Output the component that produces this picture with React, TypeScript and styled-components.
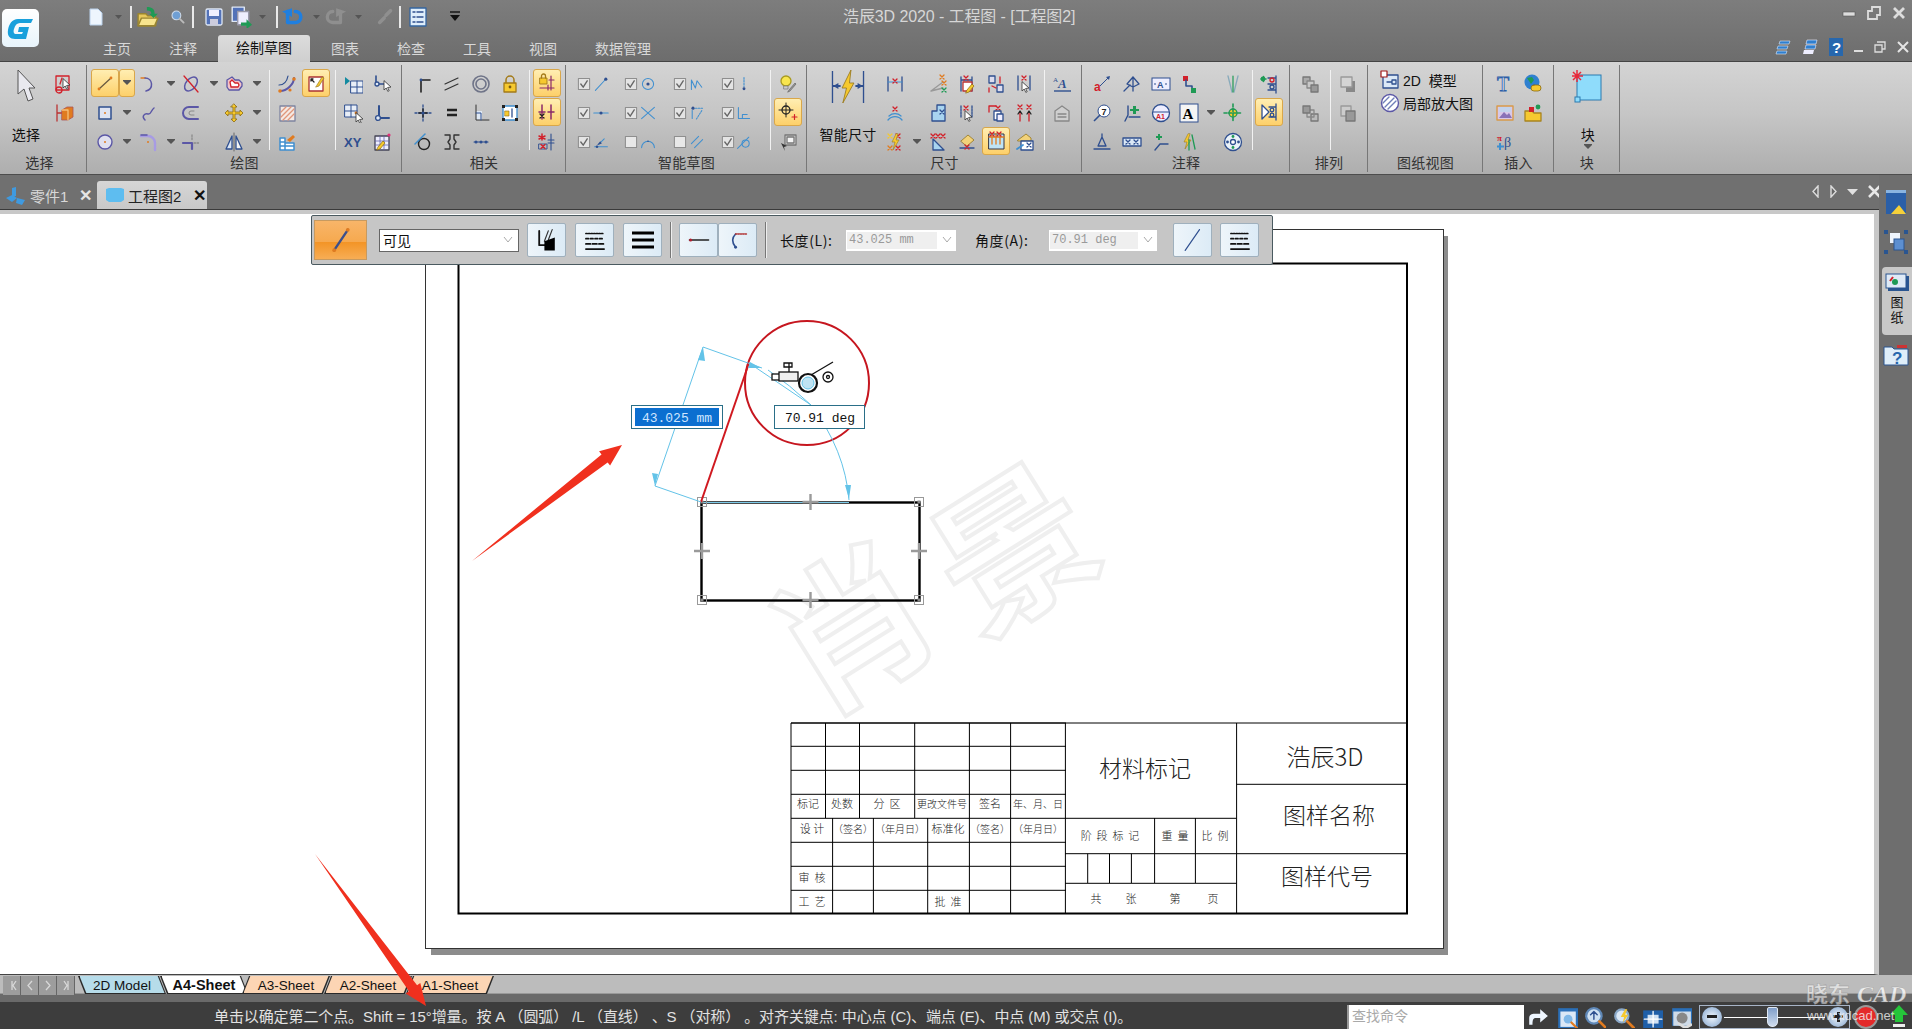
import React from "react";
import styled, { createGlobalStyle } from "styled-components";

const N = "#2f4f8f", P = "#5b57a6", R = "#d2202a", G = "#1f9a55", Y = "#f6c92f", O = "#e07b20", K = "#222", B = "#3f8fd0", A = "#8a8a8a";

const Global = createGlobalStyle`
  html, body { margin: 0; padding: 0; width: 100%; height: 100%; overflow: hidden; background: #707070; }
  body { font-family: "Liberation Sans", "Noto Sans CJK SC", sans-serif; }
  * { box-sizing: border-box; }
  svg { flex: none; }
`;

const Page = styled.div`
  position: relative; width: 1912px; height: 1029px; display: flex; flex-direction: column; overflow: hidden;
`;
const Top = styled.header`
  height: 62px; flex: none; background: linear-gradient(#7d7d7d, #6d6d6d); display: flex; flex-direction: column; position: relative;
  border-bottom: 1px solid #444;
`;
const TitleRow = styled.div`
  height: 35px; flex: none; display: flex; align-items: center; position: relative;
`;
const LogoBox = styled.div`
  width: 37px; height: 38px; margin: 9px 0 0 2px; flex: none; border-radius: 5px; background: linear-gradient(#ffffff, #e8f4fb); display: flex; align-items: center; justify-content: center; align-self: flex-start;
`;
const Qat = styled.div`
  position: absolute; left: 84px; top: 6px; height: 22px; display: flex; align-items: center;
`;
const QatSlot = styled.div<{ $w: number }>`
  width: ${(p) => p.$w}px; flex: none; display: flex; align-items: center; justify-content: center;
`;
const QatSep = styled.div`
  width: 2px; height: 22px; background: #e9e9e9; flex: none;
`;
const AppTitle = styled.div`
  position: absolute; left: 843px; top: 7px; font-size: 16px; line-height: 20px; color: #d6d6d6; white-space: nowrap; letter-spacing: -0.1px;
`;
const WinBtns = styled.div`
  position: absolute; right: 6px; top: 6px; display: flex; gap: 11px; align-items: center;
`;
const TabRow = styled.nav`
  height: 27px; flex: none; margin-left: 84px; display: flex; align-items: flex-end; position: relative;
`;
const Tab = styled.div<{ $on?: boolean }>`
  height: ${(p) => (p.$on ? 27 : 26)}px; padding: 0 ${(p) => (p.$on ? 18 : 19)}px; margin: 0 ${(p) => (p.$on ? 2 : 0)}px; font-size: 14px; line-height: 26px; white-space: nowrap;
  color: ${(p) => (p.$on ? "#111" : "#d8d8d8")};
  background: ${(p) => (p.$on ? "linear-gradient(#dcdcdc,#cfcfcf)" : "transparent")};
  border-radius: 3px 3px 0 0; position: relative; z-index: 1;
`;
const TabTools = styled.div`
  position: absolute; right: 3px; top: 3px; display: flex; gap: 11px; align-items: center;
`;
const Ribbon = styled.section`
  height: 113px; flex: none; display: flex; background: linear-gradient(#d4d4d4 0%, #c6c6c6 45%, #aeaeae 100%); border-bottom: 1px solid #4d4d4d;
`;
const GroupBox = styled.div<{ $w: number }>`
  width: ${(p) => p.$w}px; flex: none; display: flex; flex-direction: column; position: relative;
  &::after { content: ""; position: absolute; right: 0; top: 3px; bottom: 2px; width: 1px; background: #777; }
`;
const GroupBody = styled.div`
  height: 93px; padding-top: 7px; display: flex; flex: none;
`;
const GroupLabel = styled.div<{ $pr?: number }>`
  height: 18px; line-height: 16px; font-size: 14px; text-align: center; color: #333; letter-spacing: 0.3px; padding-right: ${(p) => p.$pr ?? 0}px;
`;
const Col = styled.div<{ $w: number; $ml: number }>`
  width: ${(p) => p.$w}px; margin-left: ${(p) => p.$ml}px; flex: none; display: flex; flex-direction: column;
`;
const Cell = styled.div<{ $active?: boolean; $tall?: boolean }>`
  height: ${(p) => (p.$tall ? 58 : 29)}px; flex: none; display: flex; align-items: ${(p) => (p.$tall ? "flex-start" : "center")}; justify-content: center;
  ${(p) => p.$active && `height: 28px; margin-bottom: 1px; background: linear-gradient(#ffeeb2, #fdd06a); border: 1px solid #d9a74a; border-radius: 3px;`}
`;
const BigText = styled.div`
  font-size: 14px; line-height: 17px; color: #111; white-space: nowrap; letter-spacing: 0.3px; height: 29px; display: flex; flex-direction: column; align-items: center;
`;
const VSep = styled.div`
  width: 1px; height: 80px; background: #f2f2f2; margin-top: 1px;
`;
const PaperStack = styled.div`
  display: flex; flex-direction: column; gap: 3px; padding: 1px 0 0 12px;
`;
const PaperRow = styled.div`
  display: flex; align-items: center; gap: 3px; height: 20px; font-size: 14px; color: #111; white-space: nowrap;
`;
const DocBar = styled.div`
  height: 35px; flex: none; background: #707070; display: flex; align-items: flex-end; position: relative; border-bottom: 1px solid #3a3a3a;
`;
const DocTab = styled.div<{ $on?: boolean }>`
  height: ${(p) => (p.$on ? 28 : 27)}px; width: ${(p) => (p.$on ? 110 : 92)}px; margin-left: ${(p) => (p.$on ? 0 : 5)}px; flex: none; display: flex; align-items: center; gap: 3px;
  padding-left: ${(p) => (p.$on ? 8 : 0)}px; font-size: 15px; white-space: nowrap;
  color: ${(p) => (p.$on ? "#222" : "#d8d8d8")};
  background: ${(p) => (p.$on ? "linear-gradient(#d6d6d6,#c8c8c8)" : "transparent")};
  border-radius: 3px 3px 0 0;
`;
const DocX = styled.span<{ $on?: boolean }>`
  font-size: 16px; font-weight: 700; color: ${(p) => (p.$on ? "#111" : "#e5e5e5")}; margin-left: ${(p) => (p.$on ? 9 : 8)}px;
`;
const DocNav = styled.div`
  position: absolute; left: 1811px; top: 9px; display: flex; align-items: center; gap: 9px;
`;
const Main = styled.main`
  height: 765px; flex: none; display: flex;
`;
const Workspace = styled.div`
  width: 1879px; flex: none; position: relative; background: #fff; border-top: 4px solid #c8c8c8; border-right: 5px solid #c8c8c8; border-bottom: 1px solid #444; box-shadow: 1px 0 0 #333;
`;
const Sheet = styled.svg`
  position: absolute; left: 0; top: 0; display: block;
`;
const Strip = styled.aside`
  flex: 1; background: #6e6e6e; display: flex; flex-direction: column; align-items: center; margin-top: -35px; position: relative; z-index: 2; padding-top: 13px;
`;
const StripIcon = styled.div<{ $mt: number }>`
  margin-top: ${(p) => p.$mt}px; display: flex;
`;
const StripPanel = styled.div`
  width: 30px; margin: 12px 0 0 3px; height: 68px; border-radius: 4px 0 0 4px; background: #c8c8c8; display: flex; flex-direction: column; align-items: center; padding-top: 6px; color: #111;
`;
const StripText = styled.div`
  margin-top: 4px; width: 14px; text-align: center; font-size: 13px; line-height: 15px; word-break: break-all;
`;
const FloatBar = styled.div`
  position: absolute; left: 311px; top: 1px; width: 962px; height: 50px; background: #c6c6c6; border: 1px solid #4a5a60; border-radius: 2px; display: flex; align-items: center; padding-left: 2px; z-index: 3;
`;
const BigOrange = styled.div`
  width: 53px; height: 40px; flex: none; border: 1px solid #c79a60; background: linear-gradient(#f8b569 0%, #f6a94f 55%, #f39426 56%, #f7ad55 100%); display: flex; align-items: center; justify-content: center;
`;
const SelectBox = styled.div`
  width: 140px; height: 23px; margin: 0 8px 0 12px; flex: none; background: #fff; border: 1px solid #666; display: flex; align-items: center; justify-content: space-between; padding: 0 5px 0 3px; font-size: 14px; color: #111;
`;
const PaleBtn = styled.div<{ $ml?: number }>`
  width: 39px; height: 34px; flex: none; margin-left: ${(p) => p.$ml ?? 0}px; border: 1px solid #9fb0bd; border-radius: 2px; background: linear-gradient(90deg, #eef5fa, #dcebf6); display: flex; align-items: center; justify-content: center;
`;
const BarSep = styled.div<{ $ml: number }>`
  width: 1px; height: 36px; flex: none; margin-left: ${(p) => p.$ml}px; background: #777; box-shadow: 1px 0 0 #eee;
`;
const FieldLabel = styled.div<{ $ml: number }>`
  width: 62px; flex: none; margin-left: ${(p) => p.$ml}px; font-size: 14px; letter-spacing: 0.6px; color: #111; white-space: nowrap; font-family: "Noto Sans CJK SC", sans-serif;
`;
const Field = styled.div<{ $w: number; $ml: number }>`
  width: ${(p) => p.$w}px; height: 21px; flex: none; margin-left: ${(p) => p.$ml}px; background: #fff; display: flex; align-items: center; justify-content: space-between; padding: 2px 4px 2px 1px; font-family: "Liberation Mono", monospace; font-size: 12px; color: #9a9a9a;
`;
const FieldVal = styled.span`
  background: #efefef; flex: 1; height: 100%; line-height: 17px; padding-left: 2px; margin-right: 5px; white-space: nowrap;
`;
const SheetBar = styled.div`
  height: 27px; flex: none; background: #bcbcbc; display: flex; padding: 1px 0 0 3px; border-bottom: 8px solid #6a6a6a; box-shadow: inset 0 -1px 0 #999;
  position: relative;
`;
const SheetNav = styled.div`
  width: 18px; height: 19px; flex: none; display: flex; align-items: center; justify-content: center; background: #9d9d9d; border-right: 1px solid #666;
`;
const SheetNavGap = styled.div`
  width: 3px; flex: none;
`;
const SheetTab = styled.div<{ $bg: string; $lean: "l" | "r"; $bold?: boolean }>`
  width: 88px; height: 18px; margin-right: -6px; flex: none; position: relative; display: flex; align-items: center; justify-content: center;
  font-size: ${(p) => (p.$bold ? 14.5 : 13.5)}px; color: #111; font-weight: ${(p) => (p.$bold ? 700 : 400)}; white-space: nowrap;
  clip-path: ${(p) => (p.$lean === "l" ? "polygon(0 0, 92% 0, 100% 100%, 8% 100%)" : "polygon(8% 0, 100% 0, 92% 100%, 0 100%)")};
  background: #2a2a2a;
  &::before { content: ""; position: absolute; inset: 0 1.5px 1px 1.5px; background: ${(p) => p.$bg};
    clip-path: ${(p) => (p.$lean === "l" ? "polygon(0 0, 92% 0, 100% 100%, 8% 100%)" : "polygon(8% 0, 100% 0, 92% 100%, 0 100%)")}; }
`;
const SheetTabText = styled.span`
  position: relative;
`;
const Status = styled.footer`
  height: 27px; flex: none; background: #3d3d3d; display: flex; align-items: stretch;
`;
const StatusText = styled.div`
  width: 1347px; flex: none; padding-left: 214px; line-height: 30px; font-size: 15px; color: #e2e2e2; white-space: nowrap; letter-spacing: -0.1px;
`;
const FindBox = styled.div`
  width: 177px; margin-top: 3px; flex: none; background: #fff; border-left: 2px solid #999; padding-left: 3px; line-height: 22px; font-size: 14px; color: #a9a9a9;
`;
const StatusIcons = styled.div`
  display: flex; align-items: center; gap: 6.5px; margin-left: 3px; padding-top: 3px;
`;
const Slider = styled.div`
  width: 151px; height: 24px; margin-left: 1px; flex: none; border: 1px solid #a7b4c7; display: flex; align-items: center; justify-content: space-between; position: relative; padding: 0 1px 0 2px;
`;
const SliderTrack = styled.div`
  position: absolute; left: 24px; right: 24px; top: 11px; height: 1px; background: #fff;
`;
const SliderThumb = styled.div`
  position: absolute; left: 67px; top: 1px; width: 11px; height: 20px; background: linear-gradient(#7f9ec9, #cfdcee); border: 1px solid #dfe8f3; border-radius: 2px 2px 5px 5px;
`;
const Round = styled.div<{ $sign: string }>`
  width: 20px; height: 20px; border-radius: 50%; background: radial-gradient(#f0f6fc, #7fa2cc); position: relative; z-index: 1; flex: none;
  &::before { content: ""; position: absolute; left: 5px; top: 8px; width: 10px; height: 3px; background: #222; }
  ${(p) => p.$sign === "+" && `&::after { content: ""; position: absolute; left: 8.5px; top: 5px; width: 3px; height: 10px; background: #222; }`}
`;
const Overlay = styled.svg`
  position: absolute; left: 0; top: 0; pointer-events: none; z-index: 10;
`;

const Ic = ({ children, s = 20 }: { children?: React.ReactNode; s?: number }) => (
  <svg width={s} height={s} viewBox="0 0 20 20" fill="none" strokeWidth={1.3} strokeLinecap="round" strokeLinejoin="round">
    {children}
  </svg>
);
const Cur = ({ x, y }: { x: number; y: number }) => (
  <path d={`M${x} ${y}l0 9 2.2-2 1.6 3.4 1.4-.7-1.6-3.2 3-.4z`} fill="#fff" stroke="#333" strokeWidth={0.8} />
);
const Xm = ({ x, y, c = R }: { x: number; y: number; c?: string }) => <path d={`M${x - 2} ${y - 2}l4 4m0-4l-4 4`} stroke={c} strokeWidth={1.3} />;
const Dot = ({ x, y, c = O, r = 1.4 }: { x: number; y: number; c?: string; r?: number }) => <circle cx={x} cy={y} r={r} fill={c} />;
const Tk = ({ d, c = N, w = 1.3 }: { d: string; c?: string; w?: number }) => <path d={d} stroke={c} strokeWidth={w} />;
const Grid4 = ({ x, y, s = 6 }: { x: number; y: number; s?: number }) => (
  <path d={`M${x} ${y}h${s * 2}v${s * 2}h${-s * 2}zM${x + s} ${y}v${s * 2}M${x} ${y + s}h${s * 2}`} stroke={N} strokeWidth={1} fill="#e8eef7" />
);
const Pencil = ({ x, y }: { x: number; y: number }) => (
  <path d={`M${x} ${y}l5-6 2 2-5 6-3 1z`} fill={Y} stroke="#8a6a10" strokeWidth={0.7} />
);

const I: Record<string, React.ReactNode> = {
  dd: <svg width="10" height="6" viewBox="0 0 10 6"><path d="M1 0h8v1l-4 4-4-4z" fill="#555" /></svg>,
  line: <Ic><Tk d="M4 16L16 5" c="#6a5a40" /><Dot x={4} y={16} /><Dot x={16} y={5} /></Ic>,
  arc: <Ic><Tk d="M3 4h4" c={O} /><Tk d="M7 4c8 0 9 11 1 13" c={P} w={1.5} /></Ic>,
  trim: <Ic><ellipse cx="10" cy="10" rx="5" ry="8" transform="rotate(40 10 10)" stroke={P} strokeWidth="1.5" /><Tk d="M3 2L17 18" c={R} /></Ic>,
  heart: <Ic><path d="M3 6l5-3 3 3h4l3 3v3l-3 4H5l-2-3z" stroke={P} fill="#f3c4c8" /><path d="M6 8l2-2 3 3h3l1 2-1 2H7z" stroke={R} fill="#fff" /></Ic>,
  rect: <Ic><rect x="4" y="4" width="12" height="12" stroke={N} strokeWidth="1.5" fill="#dfe4f2" /><Dot x={10} y={10} c={O} r={1} /></Ic>,
  spline: <Ic><Tk d="M7 17c-4-4 0-7 3-6s3-4 6-6" c={P} w={1.5} /></Ic>,
  offs: <Ic><Tk d="M17 4H8a6 6 0 0 0 0 12h9" c={P} w={2} /><Tk d="M13 8h-3a2 2 0 0 0 0 4h3" c={A} w={1} /></Ic>,
  move: <Ic><path d="M10 1l3 3h-2v5h5V7l3 3-3 3v-2h-5v5h2l-3 3-3-3h2v-5H4v2l-3-3 3-3v2h5V4H7z" fill={Y} stroke="#8a6a10" strokeWidth=".8" /></Ic>,
  circ: <Ic><circle cx="10" cy="10" r="7" stroke={P} strokeWidth="1.4" fill="#e0e0ee" /><Dot x={10} y={10} r={1} /></Ic>,
  fillet: <Ic><Tk d="M3 4h7a7 7 0 0 1 7 7v7" c="#a79be4" w={2.4} /><Tk d="M3 3h6" c={P} w={1.5} /><Dot x={10} y={10} r={1} /></Ic>,
  ext: <Ic><Tk d="M2 11h9v6" c={P} w={2.2} /><path d="M11 3v6M13 11h5" stroke={A} strokeDasharray="1.5 1.5" /></Ic>,
  mirror: <Ic><path d="M8 4L2 17h6z" stroke={N} fill="#dbe6f4" /><path d="M12 4l6 13h-6z" stroke={N} fill="#f4f4f4" /><Tk d="M10 1v18" c="#666" w={1} /></Ic>,
  dimc: <Ic><Tk d="M3 17C10 17 17 10 17 4" c={P} w={2} /><Tk d="M2 11C7 11 10 7 11 2" c={N} w={1.2} /><Dot x={3} y={17} r={1.8} /><Dot x={17} y={5} r={1.8} /><Dot x={13} y={16} r={1.6} /></Ic>,
  note: <Ic><rect x="3" y="4" width="14" height="14" stroke="#a33" fill="#fff" /><Tk d="M5 6l3 3M5 6h2M5 6v2" c={K} /><path d="M11 12l5-8 2 1-5 8-3 1z" fill={Y} stroke="#9a7a20" strokeWidth=".7" /></Ic>,
  hatch: <Ic><rect x="3" y="3" width="15" height="15" stroke="#7d84a0" fill="#f5e9e3" /><path d="M4 9l5-5M4 14l10-10M6 17L17 6M11 17l6-6" stroke="#e0967a" /></Ic>,
  props: <Ic><path d="M3 6h5v12H3zM8 11h9v7H8zM3 10h5M3 14h14" stroke={B} fill="#fff" strokeWidth="1.5" /><path d="M10 8l6-5 2 2-5 5z" fill={O} /></Ic>,
  vgrid: <Ic><path d="M2 3l5 4-5 4z" fill="#138aa0" /><Grid4 x={8} y={7} /></Ic>,
  vsel: <Ic><Tk d="M4 2v8h8" c={N} w={1.6} /><circle cx="5" cy="10" r="2" fill="#dfe9f5" stroke={N} /><Cur x={12} y={7} /></Ic>,
  gsel: <Ic><Grid4 x={2} y={2} /><Dot x={13} y={10} c={O} /><Cur x={13} y={10} /></Ic>,
  ell: <Ic><Tk d="M7 3v12h10" c={N} w={2} /><circle cx="6" cy="15" r="2.4" fill="#dfe9f5" stroke={N} /></Ic>,
  xy: <svg width="22" height="20" viewBox="0 0 22 20"><text x="2" y="15" fontSize="13" fontWeight="700" fill={N} fontFamily="Liberation Sans">XY</text></svg>,
  pgrid: <Ic><rect x="3" y="4" width="14" height="14" stroke="#445" fill="#eef" /><path d="M3 9h14M3 13h14M8 4v14M12 4v14" stroke="#66a" strokeWidth=".8" /><Pencil x={6} y={15} /><Dot x={17} y={3} c="#e0307a" r={1.6} /></Ic>,
  conn: <Ic><Tk d="M8 18V6h9" c={K} w={1.6} /><Dot x={8} y={6} c={N} /></Ic>,
  slash: <Ic><Tk d="M3 10L16 4M3 16L16 10" c="#333" w={1.2} /></Ic>,
  ring: <Ic><circle cx="10" cy="10" r="8" stroke="#6f7488" strokeWidth="1.6" /><circle cx="10" cy="10" r="5" stroke="#6f7488" strokeWidth="1.6" /></Ic>,
  lock: <Ic><path d="M6 9V6a4 4 0 0 1 8 0v3" stroke="#a37a18" strokeWidth="1.5" /><rect x="4" y="9" width="12" height="9" fill={Y} stroke="#a37a18" /><Dot x={10} y={13} c="#7a5a10" /></Ic>,
  cross: <Ic><path d="M10 2v16M2 10h16" stroke={N} strokeDasharray="2 1.5" /><Tk d="M6 10h8M10 6v8" c={K} w={1.4} /><Dot x={10} y={10} c={N} r={1.6} /></Ic>,
  eq: <Ic><path d="M5 7h10M5 12h10" stroke={K} strokeWidth="2.4" strokeLinecap="butt" /></Ic>,
  lbox: <Ic><rect x="5" y="8" width="6" height="9" fill="#dfe9f5" /><Tk d="M5 2v15h13" c="#333" w={1} /><Tk d="M5 10h5v7" c={N} w={1} /></Ic>,
  dots: <Ic><rect x="3" y="3" width="14" height="14" stroke={B} fill="#fff" /><path d="M2 2h3v3H2zM15 2h3v3h-3zM2 15h3v3H2zM15 15h3v3h-3z" fill={K} /><rect x="5" y="8" width="4" height="5" fill={Y} stroke="#8a6a10" strokeWidth=".6" /><Tk d="M12 6v8" c={N} /></Ic>,
  tan: <Ic><circle cx="11" cy="12" r="5.5" stroke={K} strokeWidth="1.4" /><Tk d="M2 12L12 2" c={B} w={1.5} /></Ic>,
  sym: <Ic><Tk d="M3 3h5v4l-2 3 2 3v4H3M17 3h-5v4l2 3-2 3v4h5" c="#333" w={1.4} /></Ic>,
  dots3: <Ic><Tk d="M3 10h14" c={N} w={1.1} /><Dot x={5} y={10} c={N} r={1.5} /><Dot x={10} y={10} c={N} r={1.5} /><Dot x={15} y={10} c={N} r={1.5} /></Ic>,
  lockd: <Ic><rect x="3" y="5" width="7" height="6" fill={Y} stroke="#a37a18" strokeWidth=".9" /><path d="M4.5 5V3a2 2 0 0 1 4 0v2" stroke="#a37a18" /><Tk d="M3 15h14M14 3v14M11 12v5M17 7h-5" c="#8a2a6a" w={1.2} /></Ic>,
  fork: <Ic><Tk d="M5 3v14M14 3v14M2 10h6M11 10h6" c="#8a2a6a" w={1.5} /><Xm x={5} y={14} c={K} /></Ic>,
  ast: <Ic><Tk d="M5 2v6M2 4l6 3M8 4L2 7" c={R} w={1.5} /><Tk d="M14 2v16M11 8h6M11 11h6" c={N} w={1.1} /><rect x="2" y="12" width="8" height="5" stroke={N} strokeWidth=".9" /><Xm x={6} y={14.5} /></Ic>,
  chk: <Ic s={16}><rect x="3" y="3" width="14" height="14" fill="#e4e4e4" stroke="#8e8e8e" /><path d="M6 10l3 4 5-8" stroke="#666" strokeWidth="1.7" /></Ic>,
  unc: <Ic s={16}><rect x="3" y="3" width="14" height="14" fill="#e8e8e8" stroke="#8e8e8e" /></Ic>,
  a1: <Ic s={16}><Tk d="M3 18L15 5" c={B} /><Dot x={16} y={4} c={N} r={2} /></Ic>,
  a2: <Ic s={16}><Tk d="M1 10h18" c={B} /><Dot x={10} y={10} c={N} r={2} /></Ic>,
  a3: <Ic s={16}><Tk d="M2 16h16" c={B} /><Tk d="M7 13l7-7" c={B} /><path d="M5 14l4-5 2 3z" fill={N} /><Dot x={5} y={16} c={N} r={1.6} /></Ic>,
  b1: <Ic s={16}><circle cx="10" cy="10" r="7" stroke={B} strokeWidth="1.3" /><Dot x={10} y={10} c={N} r={2} /></Ic>,
  b2: <Ic s={16}><Tk d="M2 3l16 14M2 17L18 3" c={B} /></Ic>,
  b3: <Ic s={16}><Tk d="M2 17a8 8 0 0 1 16 0" c={B} w={1.4} /><Dot x={10} y={9} c={N} r={1} /></Ic>,
  c1: <Ic s={16}><Tk d="M3 17V5l5 10 2-9 6 8" c={B} /></Ic>,
  c2: <Ic s={16}><Dot x={5} y={4} c={N} r={2} /><path d="M8 4h10M16 7l-7 11" stroke={B} strokeDasharray="2 1.5" /><Tk d="M4 7v10" c={B} /></Ic>,
  c3: <Ic s={16}><Tk d="M3 12L12 3M7 17L17 7" c={B} /></Ic>,
  d1: <Ic s={16}><path d="M10 2v11" stroke={B} strokeWidth="1.4" strokeDasharray="2 1.5" /><Dot x={10} y={16} c={N} r={1.8} /></Ic>,
  d2: <Ic s={16}><Tk d="M3 3v14h14" c={B} /><Tk d="M8 17v-5h6" c={B} /></Ic>,
  d3: <Ic s={16}><Tk d="M2 18L16 4" c={B} /><circle cx="12" cy="12" r="4.5" stroke={B} /></Ic>,
  bulb: <Ic><circle cx="8" cy="7" r="5" fill="#f8e64f" stroke="#a89a20" /><path d="M6 12h4v3H6z" fill="#ccc" stroke="#777" strokeWidth=".7" /><path d="M11 16l6-7 1 1-6 7-2 1z" fill="#999" stroke="#555" strokeWidth=".6" /></Ic>,
  tgt: <Ic><circle cx="8" cy="8" r="4" stroke={K} /><Tk d="M8 1v14M1 8h14" c={K} w={1} /><Tk d="M14 15h5M16.5 12.5v5" c={R} w={1.2} /></Ic>,
  tgt2: <Ic><rect x="7" y="3" width="11" height="10" fill="#ddd" stroke="#777" /><rect x="9" y="5" width="7" height="6" stroke="#777" fill="#f4f4f4" /><path d="M3 11l6 3-3 1 1 4z" fill="#333" /></Ic>,
  e1: <Ic><Tk d="M3 3v14M17 3v14" c={N} /><Tk d="M3 8h14" c={B} w={1} /><Xm x={10} y={7} /></Ic>,
  e2: <Ic><Tk d="M3 17a9 9 0 0 1 14 0M4 13a9 9 0 0 1 12 0" c={B} /><Xm x={10} y={6} /></Ic>,
  e3: <Ic><Xm x={5} y={4} c={Y} /><Xm x={13} y={4} /><Xm x={5} y={16} c={O} /><Xm x={13} y={16} /><path d="M11 2l-4 8h3l-2 8 6-10h-3l2-6z" fill={Y} stroke="#9a7a20" strokeWidth=".6" /></Ic>,
  f1: <Ic><Tk d="M2 17L14 14M2 17l12-9" c="#999" /><Xm x={13} y={3} c={O} /><Xm x={15} y={9} c={O} /><Xm x={15} y={16} c={G} /></Ic>,
  f2: <Ic><path d="M3 18V8h5V2h8v16z" fill="#a8d4f0" stroke={N} /><Xm x={13} y={9} c={N} /></Ic>,
  f3: <Ic><Xm x={4} y={4} /><Xm x={9} y={4} /><Xm x={14} y={4} /><path d="M4 18V7l11 11z" fill="#a8d4f0" stroke={N} /></Ic>,
  g1: <Ic><Tk d="M4 3v14M15 3v14M4 6h11" c={N} /><Xm x={9} y={4} /><rect x="6" y="8" width="9" height="9" fill="#fff" stroke="#b33" /><Pencil x={10} y={16} /></Ic>,
  g2: <Ic><path d="M4 3v12M15 3v12" stroke={N} strokeDasharray="2 1" /><Xm x={9} y={5} /><Cur x={8} y={8} /></Ic>,
  g3: <Ic><path d="M4 9l7-6 6 5-7 6z" fill="#f2d27a" stroke="#8a6a10" strokeWidth=".7" /><Tk d="M3 16h14" c={N} /><Xm x={10} y={15} /></Ic>,
  h1: <Ic><rect x="3" y="2" width="6" height="7" stroke={N} fill="#dde" /><rect x="11" y="11" width="6" height="7" stroke={N} fill="#dde" /><path d="M14 3v5M3 14v4M14 9v-1M6 12l4 2" stroke={R} /></Ic>,
  h2: <Ic><path d="M3 3h7M3 3v6" stroke={R} /><Xm x={12} y={5} /><rect x="8" y="8" width="7" height="9" fill="#fff" stroke={N} /><rect x="11" y="11" width="6" height="7" fill="#eef" stroke={N} /></Ic>,
  h3: <Ic><rect x="3" y="3" width="15" height="15" stroke="#334" fill="#bfe4f4" strokeWidth="1" /><path d="M6 3v10M10 3v10M14 3v10M3 6h15" stroke={O} /><Xm x={6} y={3} /><Xm x={13} y={3} /></Ic>,
  i1: <Ic><Tk d="M3 2v14M15 2v14" c={N} /><Xm x={9} y={4} /><Cur x={7} y={8} /></Ic>,
  i2: <Ic><Xm x={5} y={4} /><Xm x={14} y={4} /><Tk d="M5 9v9M14 9v9" c={R} /><path d="M3 11l2-3 2 3M12 11l2-3 2 3" stroke={K} /></Ic>,
  i3: <Ic><path d="M3 8l8-6 5 4v3H3z" fill="#f2d27a" stroke="#8a6a10" strokeWidth=".7" /><rect x="6" y="9" width="12" height="9" fill="#fff" stroke={N} /><Xm x={14} y={13} c={N} /><Tk d="M2 17l6-4" c={B} w={1.8} /></Ic>,
  j1: <svg width="22" height="20" viewBox="0 0 22 20"><text x="7" y="14" fontSize="13" fontWeight="700" fontStyle="italic" fontFamily="Liberation Serif" fill={N}>A</text><text x="2" y="8" fontSize="7" fontFamily="Liberation Serif" fill={N}>A</text><path d="M3 17h17" stroke={N} strokeWidth="1.4" /></svg>,
  j2: <Ic><path d="M3 8l7-5 7 5v10H3z" stroke="#888" fill="#cfcfcf" /><path d="M6 11h8M6 14h8" stroke="#888" /></Ic>,
  k1: <svg width="20" height="20" viewBox="0 0 20 20"><text x="2" y="17" fontSize="12" fontWeight="700" fill={R} fontFamily="Liberation Sans">a</text><path d="M8 12L17 3" stroke={N} /><path d="M18 2l-4 1 3 3z" fill={N} /></svg>,
  k2: <Ic><Tk d="M2 17l6-6" c={N} /><Tk d="M11 3v14M11 3l6 7-6 3-6-3z" c={N} /></Ic>,
  k3: <svg width="22" height="20" viewBox="0 0 22 20"><rect x="2" y="4" width="18" height="12" fill="#eef" stroke={N} /><text x="7" y="14" fontSize="9" fontWeight="700" fill={N} fontFamily="Liberation Sans">A</text><path d="M4 10h2M15 10h2" stroke={N} /></svg>,
  k4: <Ic><path d="M4 2h5v5H4z" fill={R} /><Tk d="M7 6v6h6v3" c={N} w={1.6} /><path d="M12 14h5v5h-5z" fill={G} /></Ic>,
  k5: <Ic><Tk d="M5 2l4 16M15 2l-4 16" c="#8ab" /><Tk d="M10 2v16" c={G} w={1.2} /></Ic>,
  l1: <svg width="20" height="20" viewBox="0 0 20 20"><circle cx="12" cy="8" r="6" stroke={N} fill="#fff" /><text x="9.5" y="12" fontSize="9" fontWeight="700" fill={K} fontFamily="Liberation Sans">7</text><path d="M8 12L2 18" stroke={N} strokeWidth="1.6" /></svg>,
  l2: <Ic><path d="M6 3v9l-3 6" stroke={N} strokeWidth="1.4" /><path d="M11 3h3v3h3v2h-3v3h-3V8H8V6h3z" fill={G} /><Tk d="M7 14h11" c={N} /></Ic>,
  l3: <svg width="20" height="20" viewBox="0 0 20 20"><circle cx="10" cy="10" r="8.5" stroke={N} fill="#eef" strokeWidth="1.3" /><path d="M2 9h16" stroke={N} /><text x="5" y="16" fontSize="7" fontWeight="700" fill={R} fontFamily="Liberation Sans">A1</text></svg>,
  l4: <svg width="20" height="20" viewBox="0 0 20 20"><rect x="1" y="1" width="18" height="18" fill="#f4f4f4" stroke={N} /><text x="3.5" y="16" fontSize="15" fontWeight="700" fill="#000" fontFamily="Liberation Serif">A</text></svg>,
  l5: <Ic><circle cx="10" cy="10" r="4" fill={Y} stroke={G} /><path d="M10 1v18M1 10h18" stroke={G} strokeWidth="1.6" strokeDasharray="3 1.5" /></Ic>,
  m1: <Ic><Tk d="M10 5l-4 9h8zM2 17h16M10 2v3" c={N} /></Ic>,
  m2: <Ic><rect x="1" y="6" width="18" height="8" stroke={N} fill="#dbe8f6" /><Xm x={6} y={10} c={N} /><Xm x={14} y={10} c={N} /></Ic>,
  m3: <Ic><path d="M7 2h2v2h2v2H9v2H7V6H5V4h2z" fill={G} /><Tk d="M4 18l5-6h8" c={N} w={1.4} /></Ic>,
  m4: <Ic><path d="M9 2l-4 8h3l-2 7 6-9H9l2-6z" fill={Y} stroke="#9a7a20" strokeWidth=".6" /><Tk d="M13 3l3 14M10 8v10" c={G} /></Ic>,
  m5: <Ic><circle cx="10" cy="10" r="8.5" fill="#eaf2f8" stroke={N} strokeWidth="1.3" /><circle cx="10" cy="10" r="2.5" fill="#fff" stroke={N} /><Dot x={10} y={4.5} c={G} /><Dot x={10} y={15.5} c={G} /><Dot x={4.5} y={10} c={N} /><Dot x={15.5} y={10} c={N} /></Ic>,
  n1: <Ic><Dot x={4} y={5} c={G} r={2.4} /><Tk d="M2 5h5M4.5 2.5v5" c={G} w={1.6} /><Tk d="M17 2v17M9 10h8M9 4h8M9 16h8" c={N} /><circle cx="13" cy="6" r="2" stroke={R} /><circle cx="13" cy="13" r="2" stroke={N} /></Ic>,
  n2: <Ic><path d="M3 3l7 7-7 7z" stroke={N} fill="#fff" /><Tk d="M17 2v16M10 5h7M10 15h7" c={N} /><circle cx="13" cy="8" r="1.8" stroke={N} /><circle cx="13" cy="13" r="1.8" stroke={N} /></Ic>,
  o1: <Ic><path d="M2 3h7v7H2z" fill="#aaa" stroke="#777" /><path d="M6 7h7v7H6z" fill="#c8c8c8" stroke="#888" /><path d="M10 11h7v7h-7z" fill="#999" stroke="#777" /></Ic>,
  o2: <Ic><path d="M10 11h7v7h-7z" fill="#bbb" stroke="#777" /><path d="M6 7h7v7H6z" fill="none" stroke="#888" /><path d="M2 3h7v7H2z" fill="#999" stroke="#777" /></Ic>,
  o3: <Ic><path d="M8 7h9v11H8z" fill="#888" /><path d="M3 3h11v10H3z" fill="#d4d4d4" stroke="#999" /></Ic>,
  o4: <Ic><path d="M3 3h10v10H3z" fill="#ccc" stroke="#999" /><path d="M8 8h9v10H8z" fill="#999" stroke="#777" /></Ic>,
  p2d: <Ic><rect x="3" y="5" width="15" height="13" stroke={N} fill="#dbe8f6" strokeWidth="1.3" /><rect x="1" y="1" width="6" height="6" stroke="#a01818" fill="#fff" strokeWidth="1.2" /><path d="M7 12h5M12 10h4v4h-4z" stroke={N} /></Ic>,
  pz: <Ic><circle cx="10" cy="10" r="8.5" stroke={P} strokeWidth="1.4" fill="#fff" /><path d="M5 14l9-9M3 10l6-6M8 16l8-8" stroke="#6f7fb8" strokeWidth="1.4" /></Ic>,
  t: <svg width="20" height="20" viewBox="0 0 20 20"><text x="2" y="17" fontSize="20" fontFamily="Liberation Serif" fill="#fff" stroke="#2f5fa8" strokeWidth=".9">T</text></svg>,
  web: <Ic><circle cx="9" cy="8" r="7.5" fill="#2f80d0" /><path d="M4 4l5-1 2 3-3 4z" fill={G} /><rect x="8" y="11" width="10" height="6" rx="3" fill={Y} stroke="#8a6a10" strokeWidth=".8" /></Ic>,
  pic: <Ic><rect x="2" y="3" width="16" height="14" fill="#d9c7e8" stroke="#d89a4a" strokeWidth="1.4" /><path d="M4 15l5-6 3 3 2-2 3 5z" fill="#8a72b8" /><path d="M4 4h12v5H4z" fill="#b8d8f0" opacity=".7" /></Ic>,
  fold: <Ic><path d="M2 8h7l2 2h7v8H2z" fill={Y} stroke="#a88420" /><rect x="6" y="4" width="5" height="5" fill={R} /><Dot x={15} y={4} c={G} r={2.4} /></Ic>,
  pib: <svg width="20" height="20" viewBox="0 0 20 20"><text x="9" y="15" fontSize="14" fontFamily="Liberation Serif" fill={N}>β</text><text x="2" y="9" fontSize="9" fontWeight="700" fill={R} fontFamily="Liberation Serif">π</text><path d="M5 11v7M2 14.5h7" stroke={B} strokeWidth="2" /></svg>,
  block: <svg width="34" height="36" viewBox="0 0 34 36"><rect x="6" y="6" width="24" height="25" fill="#8fdcfb" stroke="#2a7ab0" /><rect x="4" y="28" width="5" height="5" fill="#8fdcfb" stroke="#2a7ab0" /><path d="M6 1v12M1 7h11M2 3l8 8M10 3l-8 8" stroke="#e8283a" strokeWidth="1.5" /></svg>,
  bolt: <svg width="34" height="36" viewBox="0 0 46 36" preserveAspectRatio="none"><path d="M2 2v32M44 2v32M2 17h11M33 17h11" stroke={N} strokeWidth="1.8" /><path d="M3 17l7-3v6zM43 17l-7-3v6z" fill={N} /><path d="M27 1L15 19h6l-5 15 15-20h-6z" fill={Y} stroke="#9a7a20" /></svg>,
  bigarrow: <svg width="20" height="34" viewBox="0 0 20 34"><path d="M2 1v24l6-5 4 12 5-2-4-11h6z" fill="#e9e9ef" stroke="#555" strokeWidth="1" /></svg>,
  s1: <Ic><rect x="1" y="2" width="13" height="14" stroke={R} fill="none" /><circle cx="4" cy="16" r="3" stroke={R} /><Tk d="M7 4l-2 6" c={R} /><Cur x={8} y={5} /></Ic>,
  s2: <Ic><Tk d="M2 2v16M2 10h5" c="#b33" /><path d="M7 7l5-3h6v10l-5 3H7z" fill={O} stroke="#a55" strokeWidth=".8" /><path d="M7 7h6v10" stroke="#f5c07a" /></Ic>,
};

type Item = string | null | { big: string } | { text: string; dd?: boolean };
type ColDef = { c: number; w?: number; sep?: boolean; rows?: Item[] };
type GroupDef = { x0: number; x1: number; label: string; pr?: number; cols: ColDef[] };

const ck = (c: number, r: string[]): ColDef => ({ c, w: 16, rows: r });
const groups: GroupDef[] = [
  { x0: 0, x1: 87, label: "选择", pr: 8, cols: [
    { c: 26, w: 46, rows: [{ big: "bigarrow" }, { text: "选择" }] },
    { c: 65, w: 28, rows: ["s1", "s2"] },
  ] },
  { x0: 87, x1: 402, label: "绘图", cols: [
    { c: 105, w: 28, rows: ["*line", "rect", "circ"] },
    { c: 127, w: 16, rows: ["*dd", "dd", "dd"] },
    { c: 148, w: 22, rows: ["arc", "spline", "fillet"] },
    { c: 171, w: 14, rows: ["dd", null, "dd"] },
    { c: 191, w: 22, rows: ["trim", "offs", "ext"] },
    { c: 214, w: 14, rows: ["dd"] },
    { c: 233.5, w: 22, rows: ["heart", "move", "mirror"] },
    { c: 257, w: 14, rows: ["dd", "dd", "dd"] },
    { c: 269, sep: true },
    { c: 287, w: 28, rows: ["dimc", "hatch", "props"] },
    { c: 316, w: 28, rows: ["*note"] },
    { c: 335.5, sep: true },
    { c: 353, w: 28, rows: ["vgrid", "gsel", "xy"] },
    { c: 381.5, w: 28, rows: ["vsel", "ell", "pgrid"] },
  ] },
  { x0: 402, x1: 566, label: "相关", cols: [
    { c: 423, w: 28, rows: ["conn", "cross", "tan"] },
    { c: 452, w: 28, rows: ["slash", "eq", "sym"] },
    { c: 481, w: 28, rows: ["ring", "lbox", "dots3"] },
    { c: 510, w: 28, rows: ["lock", "dots"] },
    { c: 529, sep: true },
    { c: 547, w: 28, rows: ["*lockd", "*fork", "ast"] },
  ] },
  { x0: 566, x1: 807, label: "智能草图", cols: [
    ck(584, ["chk", "chk", "chk"]), { c: 601, w: 16, rows: ["a1", "a2", "a3"] },
    ck(631, ["chk", "chk", "unc"]), { c: 648, w: 16, rows: ["b1", "b2", "b3"] },
    ck(680, ["chk", "chk", "unc"]), { c: 697, w: 16, rows: ["c1", "c2", "c3"] },
    ck(728, ["chk", "chk", "chk"]), { c: 744, w: 16, rows: ["d1", "d2", "d3"] },
    { c: 770.5, sep: true },
    { c: 788, w: 28, rows: ["bulb", "*tgt", "tgt2"] },
  ] },
  { x0: 807, x1: 1082, label: "尺寸", cols: [
    { c: 848, w: 70, rows: [{ big: "bolt" }, { text: "智能尺寸" }] },
    { c: 895, w: 24, rows: ["e1", "e2", "e3"] },
    { c: 917, w: 14, rows: [null, null, "dd"] },
    { c: 939, w: 28, rows: ["f1", "f2", "f3"] },
    { c: 966.5, w: 28, rows: ["g1", "g2", "g3"] },
    { c: 996, w: 28, rows: ["h1", "h2", "*h3"] },
    { c: 1025, w: 28, rows: ["i1", "i2", "i3"] },
    { c: 1044, sep: true },
    { c: 1061.5, w: 28, rows: ["j1", "j2"] },
  ] },
  { x0: 1082, x1: 1290, label: "注释", cols: [
    { c: 1102, w: 28, rows: ["k1", "l1", "m1"] },
    { c: 1132, w: 28, rows: ["k2", "l2", "m2"] },
    { c: 1161, w: 28, rows: ["k3", "l3", "m3"] },
    { c: 1189, w: 28, rows: ["k4", "l4", "m4"] },
    { c: 1211, w: 12, rows: [null, "dd"] },
    { c: 1233, w: 28, rows: ["k5", "l5", "m5"] },
    { c: 1252, sep: true },
    { c: 1269, w: 28, rows: ["n1", "*n2"] },
  ] },
  { x0: 1290, x1: 1368, label: "排列", cols: [
    { c: 1311, w: 28, rows: ["o1", "o2"] },
    { c: 1330, sep: true },
    { c: 1347.5, w: 28, rows: ["o3", "o4"] },
  ] },
];

const Group = ({ g }: { g: GroupDef }) => {
  let cur = g.x0;
  return (
    <GroupBox $w={g.x1 - g.x0}>
      <GroupBody>
        {g.cols.map((c, i) => {
          const w = c.sep ? 1 : c.w ?? 28;
          const ml = c.c - w / 2 - cur;
          cur = c.c + w / 2;
          if (c.sep) return <Col key={i} $w={1} $ml={ml}><VSep /></Col>;
          return (
            <Col key={i} $w={w} $ml={ml}>
              {(c.rows ?? []).map((r, j) => {
                if (r === null) return <Cell key={j} />;
                if (typeof r === "string") {
                  const on = r[0] === "*";
                  return <Cell key={j} $active={on}>{I[on ? r.slice(1) : r]}</Cell>;
                }
                if ("big" in r) return <Cell key={j} $tall>{I[r.big]}</Cell>;
                return <Cell key={j}><BigText>{r.text}{r.dd && I.dd}</BigText></Cell>;
              })}
            </Col>
          );
        })}
      </GroupBody>
      <GroupLabel $pr={g.pr}>{g.label}</GroupLabel>
    </GroupBox>
  );
};

const qatIcons = {
  file: <svg width="14" height="18" viewBox="0 0 14 18"><path d="M1 1h8l4 4v12H1z" fill="#eef5fd" stroke="#b9d0ea" /></svg>,
  open: <Ic s={22}><path d="M1 7h7l2 2h7v9H1z" fill="#e8c95c" stroke="#9a8530" /><path d="M1 18l3-7h15l-3 7z" fill="#f7e48d" stroke="#9a8530" /><path d="M9 1c5 0 7 2 7 6h3l-4 4-4-4h2c0-2-1-3-4-3z" fill={G} /></Ic>,
  find: <Ic s={16}><circle cx="8" cy="8" r="5.5" fill="#6f9fd4" stroke="#cfdcec" /><path d="M12 12l5 5" stroke="#bbb" strokeWidth="2.4" /></Ic>,
  save: <Ic s={20}><rect x="2" y="2" width="16" height="16" rx="1.5" fill="#5372b8" stroke="#dfe8f5" /><rect x="5" y="3" width="10" height="6" fill="#eef" /><rect x="6" y="12" width="8" height="6" fill="#ccd" /></Ic>,
  saveas: <Ic s={22}><rect x="2" y="1" width="11" height="13" fill="#5372b8" stroke="#dfe8f5" /><rect x="7" y="5" width="10" height="12" fill="#eef" stroke="#99a" /><path d="M10 15h5v-3l5 5-5 4v-3h-5z" fill={G} /></Ic>,
  undo: <Ic s={22}><path d="M6 5v10h7a5 5 0 0 0 0-10" stroke="#1f7fe0" strokeWidth="3.2" /><path d="M1 5l9-3v8z" fill="#1f7fe0" /></Ic>,
  redo: <Ic s={22}><path d="M15 5v10H8A5 5 0 0 1 8 5" stroke="#8f8f8f" strokeWidth="3" /><path d="M20 5l-9-3v8z" fill="#8f8f8f" /></Ic>,
  rel: <Ic s={18}><path d="M3 16l5-5M10 8l5-5" stroke="#8f8f8f" strokeWidth="4" /></Ic>,
  list: <Ic s={20}><rect x="2" y="1" width="16" height="18" fill="#dfeefb" stroke="#3565a0" /><path d="M5 5h2M5 10h2M5 15h2M9 5h6M9 10h6M9 15h6" stroke="#2f4f8f" strokeWidth="1.4" /></Ic>,
  cust: <svg width="10" height="12" viewBox="0 0 10 12"><path d="M0 1h10" stroke="#111" strokeWidth="1.4" /><path d="M0 4h10L5 10z" fill="#111" /></svg>,
  dd: <svg width="7" height="4" viewBox="0 0 7 4"><path d="M0 0h7L3.5 4z" fill="#555" /></svg>,
};

const Rx = [
  [791, 723, 1066, 723], [791, 746.3, 1066, 746.3], [791, 770.3, 1066, 770.3], [791, 794.3, 1066, 794.3], [791, 818.3, 1236.5, 818.3],
  [791, 842.3, 1066, 842.3], [791, 866.3, 1066, 866.3], [791, 890.3, 1066, 890.3],
  [825.5, 723, 825.5, 818], [859.5, 723, 859.5, 818], [914.7, 723, 914.7, 818], [832.6, 818, 832.6, 913], [873.4, 818, 873.4, 913], [927.7, 818, 927.7, 913],
  [969.4, 723, 969.4, 913], [1010.6, 723, 1010.6, 913], [1065.4, 723, 1065.4, 913], [791, 723, 791, 913],
  [1236.6, 723, 1236.6, 913], [1065, 853.7, 1236.5, 853.7], [1065, 883.3, 1236.5, 883.3], [1154.6, 818, 1154.6, 883], [1195.4, 818, 1195.4, 883],
  [1087.7, 853.7, 1087.7, 883], [1109.5, 853.7, 1109.5, 883], [1131.4, 853.7, 1131.4, 883],
  [1236.6, 784.3, 1407, 784.3], [1236.6, 853.7, 1407, 853.7], [791, 723, 1407, 723],
];
const Tx: [string, number, number, number][] = [
  ["标记", 808, 803, 11], ["处数", 842, 803, 11], ["分  区", 887, 803, 11], ["更改文件号", 942, 803, 10], ["签名", 990, 803, 11], ["年、月、日", 1038, 803, 10],
  ["设 计", 812, 828, 11], ["（签名）", 853, 828, 10], ["（年月日）", 900, 828, 10], ["标准化", 948, 828, 11], ["（签名）", 990, 828, 10], ["（年月日）", 1038, 828, 10],
  ["审  核", 812, 877, 11], ["工  艺", 812, 901, 11], ["批  准", 948, 901, 11],
  ["阶  段  标  记", 1110, 835, 11], ["重  量", 1175, 835, 11], ["比  例", 1215, 835, 11],
  ["共", 1096, 898, 11], ["张", 1131, 898, 11], ["第", 1175, 898, 11], ["页", 1213, 898, 11],
  ["材料标记", 1145, 767, 23], ["浩辰3D", 1325, 755, 24], ["图样名称", 1329, 814, 23], ["图样代号", 1327, 875, 23],
];

const arrow = (tx: number, ty: number, hx: number, hy: number, bw: number, hw: number, hl: number) => {
  const L = Math.hypot(hx - tx, hy - ty), dx = (hx - tx) / L, dy = (hy - ty) / L, nx = -dy, ny = dx;
  const mx = hx - dx * hl, my = hy - dy * hl;
  return [[tx, ty], [mx + nx * bw, my + ny * bw], [mx + nx * hw, my + ny * hw], [hx, hy], [mx - nx * hw, my - ny * hw], [mx - nx * bw, my - ny * bw]]
    .map((p) => p.join(",")).join(" ");
};

const Handle = ({ x, y }: { x: number; y: number }) => (
  <g><rect x={x - 4.5} y={y - 4.5} width="9" height="9" fill="none" stroke="#999" /><rect x={x - 1.5} y={y - 1.5} width="3" height="3" fill="#888" /></g>
);
const Plus = ({ x, y }: { x: number; y: number }) => <path d={`M${x - 8} ${y}h16M${x} ${y - 8}v16`} stroke="#9a9a9a" strokeWidth="2.4" />;
const Dashes = () => (
  <Ic s={26}><path d="M3 5h14" stroke="#111" strokeDasharray="1 1" /><path d="M3 9h14" stroke="#111" strokeDasharray="2 1.5" /><path d="M3 13h14" stroke="#111" strokeDasharray="3.5 1.5" /><path d="M3 17h14" stroke="#111" /></Ic>
);
const Chev = () => <svg width="10" height="8" viewBox="0 0 10 8"><path d="M1 1l4 5 4-5" stroke="#aaa" fill="none" /></svg>;

export default function App() {
  const tabs = ["主页", "注释", "绘制草图", "图表", "检查", "工具", "视图", "数据管理"];
  return (
    <Page>
      <Global />
      <Top>
        <TitleRow>
          <LogoBox>
            <svg width="30" height="30" viewBox="0 0 30 30"><path d="M27 6H12C6 6 3 11 2 17c-1 6 2 9 7 9h11l3-12H13l-1 5h5l-1 2h-6c-2 0-3-2-2-5 1-4 3-6 6-6h11z" fill="#18a0dc" /></svg>
          </LogoBox>
          <Qat>
            <QatSlot $w={23}>{qatIcons.file}</QatSlot>
            <QatSlot $w={23}>{qatIcons.dd}</QatSlot>
            <QatSep />
            <QatSlot $w={32}>{qatIcons.open}</QatSlot>
            <QatSlot $w={28}>{qatIcons.find}</QatSlot>
            <QatSep />
            <QatSlot $w={40}>{qatIcons.save}</QatSlot>
            <QatSlot $w={14}>{qatIcons.saveas}</QatSlot>
            <QatSlot $w={28}>{qatIcons.dd}</QatSlot>
            <QatSep />
            <QatSlot $w={28}>{qatIcons.undo}</QatSlot>
            <QatSlot $w={20}>{qatIcons.dd}</QatSlot>
            <QatSlot $w={18}>{qatIcons.redo}</QatSlot>
            <QatSlot $w={28}>{qatIcons.dd}</QatSlot>
            <QatSlot $w={27}>{qatIcons.rel}</QatSlot>
            <QatSep />
            <QatSlot $w={34}>{qatIcons.list}</QatSlot>
            <QatSlot $w={40}>{qatIcons.cust}</QatSlot>
          </Qat>
          <AppTitle>浩辰3D 2020 - 工程图 - [工程图2]</AppTitle>
          <WinBtns>
            <svg width="14" height="14" viewBox="0 0 14 14"><rect x="1" y="6" width="12" height="4" fill="#ddd" stroke="#555" strokeWidth=".6" /></svg>
            <svg width="14" height="14" viewBox="0 0 14 14"><path d="M5 1h8v8h-3v4H1V5h4z" fill="none" stroke="#ddd" strokeWidth="1.8" /></svg>
            <svg width="14" height="14" viewBox="0 0 14 14"><path d="M2 2l10 10M12 2L2 12" stroke="#ddd" strokeWidth="2.8" /></svg>
          </WinBtns>
        </TitleRow>
        <TabRow>
          {tabs.map((t) => <Tab key={t} $on={t === "绘制草图"}>{t}</Tab>)}
          <TabTools>
            <svg width="16" height="16" viewBox="0 0 16 16"><path d="M5 2h10l-1 3H4zM3 7h10l-1 3H2zM2 12h10l-1 3H1z" fill="#2f7fcf" stroke="#dfeaf6" strokeWidth=".6" /></svg>
            <svg width="16" height="16" viewBox="0 0 16 16"><path d="M5 1h10l-1 4H4zM4 6h10l-1 4H3z" fill="#2f7fcf" stroke="#eef" strokeWidth=".6" /><path d="M2 11h10l-1 4H1z" fill="#eef" /></svg>
            <svg width="14" height="18" viewBox="0 0 14 18"><rect width="14" height="18" fill="#2767ad" /><text x="3" y="15" fontSize="15" fontWeight="700" fill="#fff" fontFamily="Liberation Sans">?</text></svg>
            <svg width="9" height="12" viewBox="0 0 9 12"><path d="M0 10h9" stroke="#ddd" strokeWidth="2" /></svg>
            <svg width="12" height="12" viewBox="0 0 12 12"><path d="M3 1h8v7H8M1 4h7v7H1z" fill="none" stroke="#ddd" strokeWidth="1.3" /></svg>
            <svg width="12" height="12" viewBox="0 0 12 12"><path d="M1 1l10 10M11 1L1 11" stroke="#e5e5e5" strokeWidth="2" /></svg>
          </TabTools>
        </TabRow>
      </Top>
      <Ribbon>
        {groups.map((g) => <Group key={g.label} g={g} />)}
        <GroupBox $w={115}>
          <GroupBody>
            <PaperStack>
              <PaperRow>{I.p2d}2D&nbsp;&nbsp;模型</PaperRow>
              <PaperRow>{I.pz}局部放大图</PaperRow>
            </PaperStack>
          </GroupBody>
          <GroupLabel>图纸视图</GroupLabel>
        </GroupBox>
        <Group g={{ x0: 1483, x1: 1554, label: "插入", cols: [
          { c: 1505, w: 28, rows: ["t", "pic", "pib"] },
          { c: 1533, w: 28, rows: ["web", "fold"] },
        ] }} />
        <Group g={{ x0: 1554, x1: 1620, label: "块", cols: [
          { c: 1588, w: 44, rows: [{ big: "block" }, { text: "块", dd: true }] },
        ] }} />
      </Ribbon>
      <DocBar>
        <DocTab>
          <svg width="22" height="22" viewBox="0 0 22 22"><path d="M1 13l6-3 5 3-5 4zM7 3l4-1v9l-4 1zM12 13l8 2-3 5-6-2z" fill="#3f9ae0" /></svg>
          零件1<DocX>✕</DocX>
        </DocTab>
        <DocTab $on>
          <svg width="20" height="18" viewBox="0 0 20 18"><path d="M1 3l3-1 12 0 3 1v11l-3 2H4l-3-2z" fill="#5ebdf0" /></svg>
          工程图2<DocX $on>✕</DocX>
        </DocTab>
        <DocNav>
          <svg width="9" height="13" viewBox="0 0 9 13"><path d="M7 1L2 6.5 7 12z" fill="#666" stroke="#ddd" strokeWidth="1.4" /></svg>
          <svg width="9" height="13" viewBox="0 0 9 13"><path d="M2 1l5 5.5L2 12z" fill="#666" stroke="#ddd" strokeWidth="1.4" /></svg>
          <svg width="11" height="8" viewBox="0 0 11 8"><path d="M0 1h11L5.5 7z" fill="#e0e0e0" /></svg>
          <svg width="15" height="15" viewBox="0 0 15 15"><path d="M2 2l11 11M13 2L2 13" stroke="#e8e8e8" strokeWidth="2.6" /></svg>
        </DocNav>
      </DocBar>
      <Main>
        <Workspace>
          <Sheet width="1874" height="760" viewBox="0 214 1874 760">
            <rect x="431" y="236" width="1017" height="719" fill="#8c8c8c" />
            <rect x="425.5" y="229.5" width="1018" height="719" fill="#fff" stroke="#333" />
            <g fontFamily="Noto Sans CJK SC, sans-serif" fontSize="155" fontWeight="700" fill="#fff" stroke="#efefef" strokeWidth="4">
              <text x="854" y="685" textAnchor="middle" transform="rotate(-32 854 630)">肖</text>
              <text x="1015" y="606" textAnchor="middle" transform="rotate(-32 1015 551)">景</text>
            </g>
            <rect x="458.5" y="263.5" width="948.5" height="650" fill="none" stroke="#000" strokeWidth="2" />
            <path d={Rx.map((l) => `M${l[0]} ${l[1]}L${l[2]} ${l[3]}`).join("")} stroke="#000" strokeWidth={1} fill="none" />
            <g fontFamily="Noto Sans CJK SC, sans-serif" fill="#222" textAnchor="middle" dominantBaseline="central">
              {Tx.map(([t, x, y, s], i) => <text key={i} x={x} y={y} fontSize={s} fontWeight={300} style={{ whiteSpace: "pre" }}>{t}</text>)}
            </g>
            <rect x="701.5" y="502.5" width="218" height="98" fill="none" stroke="#000" strokeWidth="2.4" />
            <path d="M702 502.5H849" stroke="#7ccbea" strokeWidth="1.2" />
            <Handle x={702} y={502} /><Handle x={919} y={502} /><Handle x={702} y={600} /><Handle x={919} y={600} />
            <Plus x={810.5} y={502} /><Plus x={702} y={551} /><Plus x={919} y={551} /><Plus x={810.5} y={600} />
            <circle cx="807" cy="383" r="62" fill="none" stroke="#c6161f" strokeWidth="2" />
            <path d="M701 502L749 363" stroke="#d01920" strokeWidth="2" />
            <path d="M701 502L655 486L703 347L762 368M749 363L811 405Q845 450 849 500M811 405Q790 385 768 370" stroke="#63c3e8" strokeWidth="1" fill="none" />
            <path d="M703 347l-5 13 7 1zM655 486l-3-13 6 1zM761 368l-11-6-2 6zM849 499l-4-14h6z" fill="#63c3e8" />
            <g fill="#fff" stroke="#111" strokeWidth="1.3">
              <rect x="772" y="374" width="8" height="6" />
              <rect x="779" y="372" width="19" height="9" fill="#eee" />
              <path d="M789 372v-9M784 363h8v4h-8z" />
              <circle cx="808" cy="383" r="9" strokeWidth="2.2" />
              <circle cx="828" cy="377" r="5" />
              <circle cx="828" cy="377" r="1.5" />
              <path d="M811 375L833 362" />
            </g>
            <circle cx="808" cy="383" r="6" fill="#bfe3f2" stroke="#63c3e8" />
            <rect x="631.5" y="405.5" width="91" height="23" fill="#fff" stroke="#2a6f88" />
            <rect x="635" y="408" width="84" height="18" fill="#0b6fd0" />
            <text x="677" y="422" textAnchor="middle" fontFamily="Liberation Mono, monospace" fontSize="13" fill="#cfe6ff">43.025 mm</text>
            <rect x="774.5" y="405.5" width="90" height="23" fill="#fff" stroke="#2a6f88" />
            <text x="820" y="422" textAnchor="middle" fontFamily="Liberation Mono, monospace" fontSize="13" fill="#111">70.91 deg</text>
          </Sheet>
          <FloatBar>
            <BigOrange><Ic s={34}><Tk d="M6 16L14 4" c="#3c4f8c" w={1.4} /><Dot x={6} y={16} r={1.1} /><Dot x={14} y={4} r={1.1} /></Ic></BigOrange>
            <SelectBox>可见<Chev /></SelectBox>
            <PaleBtn><Ic s={26}><Tk d="M4 3v11h6" c="#111" w={1.4} /><Tk d="M11 3l-3 8M14 2l-3 8" c="#333" w={.9} /><path d="M8 18V11l8-3v10z" fill="#000" /></Ic></PaleBtn>
            <PaleBtn $ml={9}><Dashes /></PaleBtn>
            <PaleBtn $ml={9}><svg width="24" height="20" viewBox="0 0 24 20"><path d="M1 3h22M1 10h22M1 17h22" stroke="#000" strokeWidth="3" /></svg></PaleBtn>
            <BarSep $ml={8} />
            <PaleBtn $ml={8}><Ic s={24}><Tk d="M2 10h16" c="#222" w={1.2} /><Dot x={3} y={10} c="#b02030" r={1.3} /></Ic></PaleBtn>
            <PaleBtn><Ic s={24}><Tk d="M8 5Q3 10 8 16" c={N} w={1.3} /><path d="M8 5h10" stroke="#b03030" strokeDasharray="1 1" /><Dot x={8} y={16} c={N} r={1.2} /></Ic></PaleBtn>
            <BarSep $ml={8} />
            <FieldLabel $ml={14}>长度(L):</FieldLabel>
            <Field $w={110} $ml={4}><FieldVal>43.025 mm</FieldVal><Chev /></Field>
            <FieldLabel $ml={19}>角度(A):</FieldLabel>
            <Field $w={108} $ml={12}><FieldVal>70.91 deg</FieldVal><Chev /></Field>
            <PaleBtn $ml={16}><Ic s={26}><path d="M4 18L15 2" stroke={N} strokeWidth=".9" /></Ic></PaleBtn>
            <PaleBtn $ml={8}><Dashes /></PaleBtn>
          </FloatBar>
        </Workspace>
        <Strip>
          <svg width="24" height="28" viewBox="0 0 24 28"><path d="M2 2h20v24H2z" fill="#2a5fa8" /><path d="M2 2h20v3H2z" fill="#8ab4e0" /><path d="M7 26l8-9 7 9z" fill="#f5d03a" /></svg>
          <StripIcon $mt={13}>
            <svg width="26" height="26" viewBox="0 0 26 26"><path d="M1 1h4v4H1zM21 1h4v4h-4zM1 21h4v4H1zM21 21h4v4h-4z" fill="#2a5590" /><rect x="7" y="4" width="10" height="10" fill="#eef4fc" /><rect x="11" y="10" width="10" height="11" fill="#5d8fd0" stroke="#2a5590" /></svg>
          </StripIcon>
          <StripPanel>
            <svg width="24" height="18" viewBox="0 0 24 18"><rect x="3" y="3" width="21" height="15" fill="#2a5590" /><rect x="1" y="1" width="20" height="14" fill="#dfeaf6" stroke="#2a5590" /><circle cx="10" cy="9" r="3" fill={G} /><path d="M5 8l3-4" stroke={R} strokeWidth="2" /></svg>
            <StripText>图纸</StripText>
          </StripPanel>
          <StripIcon $mt={8}>
            <svg width="26" height="24" viewBox="0 0 26 24"><path d="M1 4h8l2 2h14v16H1z" fill="#dfeef9" stroke="#2a5590" /><path d="M14 2h10v3H14z" fill="#c33" /><text x="9" y="21" fontSize="17" fontWeight="700" fill="#2767ad" fontFamily="Liberation Sans">?</text></svg>
          </StripIcon>
        </Strip>
      </Main>
      <SheetBar>
        {["M6 2v9M10 2L7 6.5 10 11", "M8 2L4 6.5 8 11", "M4 2l4 4.5L4 11", "M4 2l3 4.5L4 11M8 2v9"].map((d) => (
          <SheetNav key={d}><svg width="12" height="13" viewBox="0 0 12 13"><path d={d} stroke="#d8d8d8" fill="none" strokeWidth="1.3" /></svg></SheetNav>
        ))}
        <SheetNavGap />
        <SheetTab $bg="#b6dcea" $lean="l"><SheetTabText>2D Model</SheetTabText></SheetTab>
        <SheetTab $bg="#fff" $lean="l" $bold><SheetTabText>A4-Sheet</SheetTabText></SheetTab>
        <SheetTab $bg="#fcd5b4" $lean="r"><SheetTabText>A3-Sheet</SheetTabText></SheetTab>
        <SheetTab $bg="#fcd5b4" $lean="r"><SheetTabText>A2-Sheet</SheetTabText></SheetTab>
        <SheetTab $bg="#fcd5b4" $lean="r"><SheetTabText>A1-Sheet</SheetTabText></SheetTab>
      </SheetBar>
      <Status>
        <StatusText>单击以确定第二个点。Shift = 15°增量。按 A （圆弧） /L （直线） 、S （对称） 。对齐关键点: 中心点 (C)、端点 (E)、中点 (M) 或交点 (I)。</StatusText>
        <FindBox>查找命令</FindBox>
        <StatusIcons>
          <Ic s={22}><path d="M2 17V11c0-3 2-4 5-4h5V3l7 6-7 6v-4H8c-2 0-3 1-3 6z" fill="#eef6ff" /></Ic>
          <Ic s={22}><rect x="2" y="2" width="18" height="18" fill="#2a6fb8" /><rect x="4" y="5" width="14" height="14" fill="#dbe8f6" /><circle cx="11" cy="12" r="4" fill="#7fb8e8" /><path d="M14 15l5 5" stroke={O} strokeWidth="2" /></Ic>
          <Ic s={22}><circle cx="9" cy="9" r="7" fill="#cfe0f2" stroke="#5f88b8" strokeWidth="2" /><path d="M14 14l5 5" stroke={O} strokeWidth="2.5" /><path d="M9 5v7M6 8l3-3 3 3" stroke={N} /></Ic>
          <Ic s={22}><circle cx="8" cy="9" r="6" fill="#dbe8f6" stroke="#8aa8c8" strokeWidth="2" /><path d="M13 14l6 6" stroke={O} strokeWidth="2.5" /><path d="M11 3L7 10h3l-1 5 5-7h-3l2-5z" fill={Y} /></Ic>
          <Ic s={22}><rect x="2" y="4" width="18" height="16" fill="#1f5fa8" /><rect x="6" y="8" width="10" height="8" fill="#cfe0f2" /><path d="M11 5v14M3 12h16" stroke="#fff" strokeWidth="1.2" /></Ic>
          <Ic s={22}><rect x="2" y="2" width="18" height="16" fill="#2a6fb8" /><rect x="3" y="5" width="16" height="13" fill="#cfdbe8" /><circle cx="11" cy="11" r="5" fill="#888" /><path d="M8 16l6 4 5-3" stroke="#ddd" strokeWidth="2.5" /></Ic>
          <Slider>
            <SliderTrack /><SliderThumb />
            <Round $sign="-" /><Round $sign="+" />
          </Slider>
        </StatusIcons>
      </Status>
      <Overlay width="1912" height="1029" viewBox="0 0 1912 1029">
        <polygon points={arrow(472, 561, 622, 445, 5, 9, 22)} fill="#f0301e" />
        <polygon points={arrow(315, 854, 426, 1006, 5, 9, 22)} fill="#f0301e" />
        <circle cx="1866" cy="1017" r="11" fill="#e42a2a" stroke="#999" strokeWidth="2" />
        <path d="M1899 1005l9 10h-5v7h-8v-7h-5z" fill="#25c53a" /><rect x="1893" y="1024" width="12" height="3" fill="#eee" />
        <text x="1806" y="1002" fontSize="22" fontWeight="700" fill="#fff" fillOpacity=".55" stroke="#666" strokeOpacity=".45" strokeWidth=".5" fontFamily="Noto Sans CJK SC, sans-serif">晓东</text>
        <text x="1857" y="1002" fontSize="24" fontStyle="italic" fontWeight="700" fill="#fff" fillOpacity=".75" stroke="#777" strokeOpacity=".5" strokeWidth=".5" fontFamily="Liberation Serif, serif">CAD</text>
        <text x="1807" y="1020" fontSize="13" fill="#f2f2f2" fillOpacity=".8" fontFamily="Liberation Sans, sans-serif">www.xdcad.net</text>
      </Overlay>
    </Page>
  );
}
